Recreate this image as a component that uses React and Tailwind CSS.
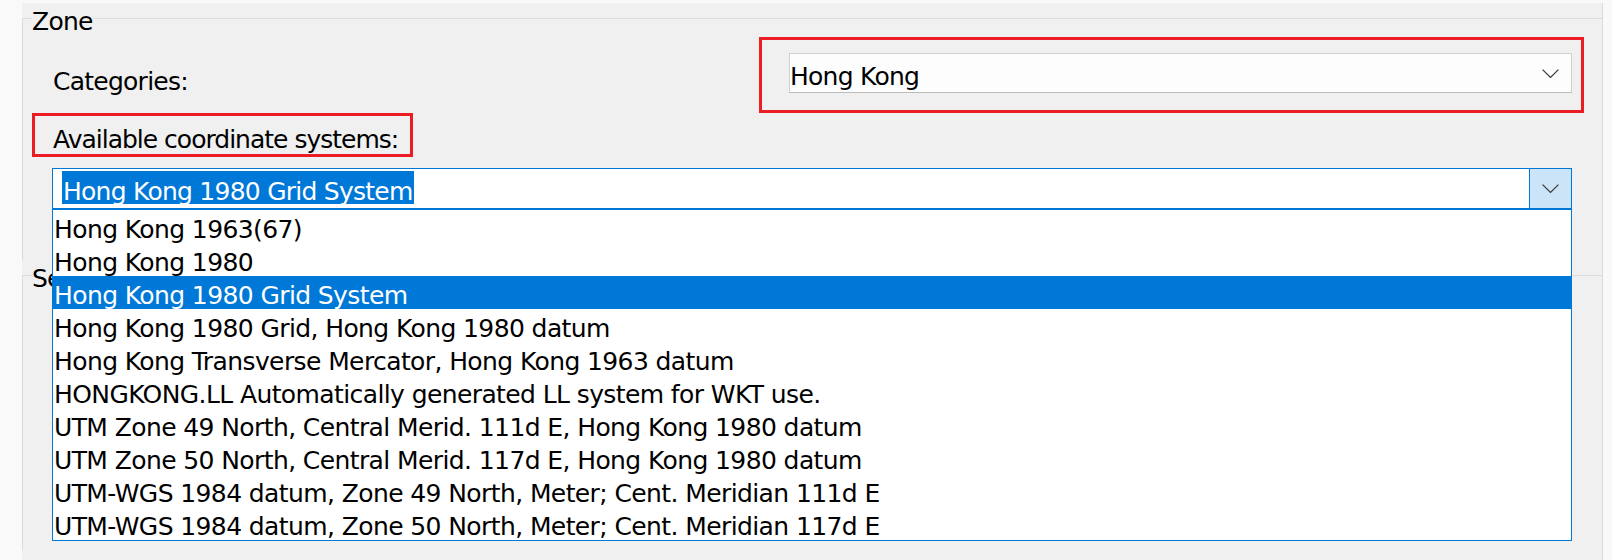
import { useState } from "react";

const systems = [
  "Hong Kong 1963(67)",
  "Hong Kong 1980",
  "Hong Kong 1980 Grid System",
  "Hong Kong 1980 Grid, Hong Kong 1980 datum",
  "Hong Kong Transverse Mercator, Hong Kong 1963 datum",
  "HONGKONG.LL Automatically generated LL system for WKT use.",
  "UTM Zone 49 North, Central Merid. 111d E, Hong Kong 1980 datum",
  "UTM Zone 50 North, Central Merid. 117d E, Hong Kong 1980 datum",
  "UTM-WGS 1984 datum, Zone 49 North, Meter; Cent. Meridian 111d E",
  "UTM-WGS 1984 datum, Zone 50 North, Meter; Cent. Meridian 117d E",
];

function Chevron() {
  return (
    <svg width="17" height="9" viewBox="0 0 17 9" fill="none">
      <polyline points="0.6,0.6 8.5,8.4 16.4,0.6" stroke="#3c3c3c" strokeWidth="1.3" />
    </svg>
  );
}

export default function App() {
  const [selected, setSelected] = useState(systems[2]);

  return (
    <div className="h-[560px] w-[1612px] overflow-hidden bg-[#f9f9f9] font-['DejaVu_Sans',sans-serif] text-[25px] tracking-[-0.75px] text-black">
      <div className="ml-[22px] mt-[3px] h-[557px] w-[1581px] border-r border-[#dadada] bg-[#f0f0f0]">
        <fieldset className="border-l border-t border-[#dcdcdc] pl-[9px] pb-[51px]">
          <legend className="pt-[7px] leading-[24px]">Zone</legend>

          <div className="mt-[3px] flex items-start">
            <span className="ml-[21px] mt-[28px] leading-[33px]">Categories:</span>
            <div className="ml-auto mr-[18px] h-[76px] w-[825px] border-[3px] border-[#ec1c24] pl-[27px] pr-[9px] pt-[13px]">
              <div className="flex h-[40px] items-center border border-[#d0d0d0] border-b-[#bcbcbc] bg-[#fdfdfd] pr-[12px]">
                <span className="pt-[8px] leading-[30px]">Hong Kong</span>
                <span className="ml-auto">
                  <Chevron />
                </span>
              </div>
            </div>
          </div>

          <div className="h-[44px] w-[381px] border-[3px] border-[#ec1c24] pl-[18px] pt-[9px] leading-[29px] tracking-[-1px]">
            Available coordinate systems:
          </div>

          <div className="relative ml-[20px] mt-[11px] flex h-[41px] w-[1520px] border border-[#0078d7] bg-white">
            <span className="ml-[9px] mt-[2px] h-[33px] bg-[#0078d7] px-[1px] pt-[4px] leading-[33px] text-white">
              {selected}
            </span>
            <div className="ml-auto flex h-full w-[42px] items-center justify-center border-l border-[#0078d7] bg-[#cce4f7]">
              <Chevron />
            </div>

            <div className="absolute left-[-1px] top-[40px] z-10 w-[1520px] border border-[#0078d7] bg-white tracking-[-0.6px]">
              {systems.map((s) => (
                <div
                  key={s}
                  onClick={() => setSelected(s)}
                  className={`h-[33px] whitespace-nowrap pl-[1px] pt-[7px] leading-[26px] ${
                    s === selected ? "bg-[#0078d7] text-white" : ""
                  }`}
                >
                  {s}
                </div>
              ))}
            </div>
          </div>
        </fieldset>

        <fieldset className="border-l border-t border-[#dcdcdc] pl-[9px]">
          <legend className="pt-[7px] leading-[24px]">Selected coordinate system</legend>
          <div className="h-[260px]" />
        </fieldset>
      </div>
    </div>
  );
}
